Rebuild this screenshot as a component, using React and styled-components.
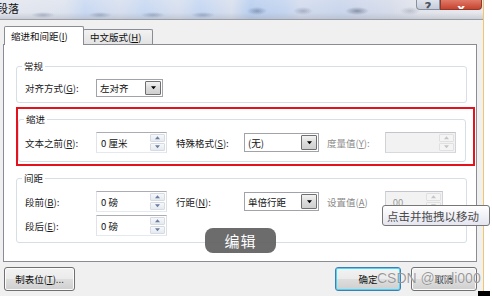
import React from "react";
import styled, { createGlobalStyle } from "styled-components";

const FONT = `"Noto Sans CJK SC", "Microsoft YaHei", sans-serif`;

const Global = createGlobalStyle`
  html, body { margin: 0; padding: 0; background: #fff; }
  body { font-family: ${FONT}; }
  * { box-sizing: border-box; }
`;

const Page = styled.div`
  position: relative;
  width: 492px;
  height: 296px;
  overflow: hidden;
  display: flex;
  background: #fff;
`;

const Window = styled.div`
  width: 484px;
  height: 296px;
  flex: none;
  border-right: 1px solid #f2c46e;
  display: flex;
  flex-direction: column;
  background: #f0f0f0;
`;

const TitleBar = styled.div`
  height: 20px;
  flex: none;
  display: flex;
  align-items: flex-start;
  border-bottom: 1px solid #9a9ea6;
  background:
    radial-gradient(ellipse 12px 3px at 43px 15px, rgba(80, 95, 125, 0.35), transparent),
    radial-gradient(ellipse 12px 3px at 100px 15px, rgba(80, 95, 125, 0.35), transparent),
    radial-gradient(ellipse 12px 3px at 153px 15px, rgba(80, 95, 125, 0.35), transparent),
    radial-gradient(ellipse 12px 3px at 203px 15px, rgba(80, 95, 125, 0.35), transparent),
    radial-gradient(ellipse 10px 4px at 257px 11px, rgba(60, 75, 105, 0.4), transparent),
    radial-gradient(ellipse 10px 4px at 303px 11px, rgba(60, 75, 105, 0.3), transparent),
    radial-gradient(ellipse 12px 4px at 357px 11px, rgba(50, 60, 85, 0.45), transparent),
    radial-gradient(ellipse 10px 4px at 410px 11px, rgba(80, 90, 110, 0.25), transparent),
    linear-gradient(180deg, rgba(255, 255, 255, 0.15), rgba(255, 255, 255, 0) 65%, rgba(170, 175, 185, 0.45)),
    linear-gradient(
      90deg,
      #e4e6ee 0px,
      #dde3ee 65px,
      #c8d8f2 85px,
      #d7dfee 120px,
      #c7d8f2 145px,
      #d7dfee 178px,
      #c4d6f2 200px,
      #d8dfed 232px,
      #b8ceef 250px,
      #c3d4ef 285px,
      #d2dbed 300px,
      #c9d5ec 340px,
      #d5dbe9 390px,
      #e2e4eb 420px,
      #e8e9ee 483px
    );
`;

const Title = styled.span`
  font-size: 11px;
  line-height: 14px;
  margin: 1px 0 0 -3px;
  color: #111;
`;

const Caption = styled.div`
  margin-left: auto;
  margin-right: 1px;
  display: flex;
`;

const CapButton = styled.div`
  width: ${(p) => (p.$close ? 42 : 24)}px;
  height: 10px;
  overflow: hidden;
  display: flex;
  justify-content: center;
  align-items: flex-end;
  border: 1px solid ${(p) => (p.$close ? "#8e3a2c" : "#8790a0")};
  border-top: none;
  border-radius: ${(p) => (p.$close ? "0 0 4px 0" : "0 0 0 4px")};
  background: ${(p) =>
    p.$close
      ? "linear-gradient(180deg, #e07a68, #c7432f)"
      : "linear-gradient(180deg, #dfe4ec, #c6ccd7)"};
  color: ${(p) => (p.$close ? "#fff" : "#4a5260")};
  font-family: "DejaVu Sans", sans-serif;
  font-weight: bold;
  font-size: 12px;
  line-height: 10px;
  & > span {
    transform: translateY(${(p) => (p.$close ? 5 : 3)}px);
  }
`;

const Body = styled.div`
  flex: 1;
  display: flex;
  flex-direction: column;
  padding: 6px 6px 0 3px;
`;

const TabStrip = styled.div`
  display: flex;
  align-items: flex-end;
  height: 18px;
  padding-left: 1px;
  position: relative;
  z-index: 1;
`;

const Tab = styled.div`
  height: ${(p) => (p.$active ? 19 : 15)}px;
  margin-bottom: ${(p) => (p.$active ? -1 : 0)}px;
  width: ${(p) => p.$w}px;
  margin-left: ${(p) => (p.$active ? 0 : -1)}px;
  border: 1px solid #898c95;
  border-bottom: none;
  border-radius: 2px 2px 0 0;
  background: ${(p) =>
    p.$active ? "#fff" : "linear-gradient(180deg, #f2f2f2, #e3e3e3)"};
  font-size: 9.5px;
  line-height: 12px;
  color: #111;
  padding: ${(p) => (p.$active ? "3px 0 0 6px" : "1px 0 0 6px")};
  white-space: nowrap;
`;

const Panel = styled.div`
  height: 218px;
  flex: none;
  border: 1px solid #898c95;
  background: #fff;
  padding: 0 9px 0 12px;
  display: flex;
  flex-direction: column;
`;

const Group = styled.div`
  border: 1px solid #d5dfe5;
  border-radius: 3px;
  margin: ${(p) => p.$m};
  padding: ${(p) => p.$p};
  display: flex;
  flex-direction: column;
  gap: 3px;
`;

const GroupTitle = styled.div`
  align-self: flex-start;
  margin: -7px 0 4px ${(p) => p.$ml || 3}px;
  padding: 0 2px;
  background: #fff;
  font-size: 9.5px;
  line-height: 12px;
  color: #1a1a1a;
`;

const RedFrame = styled.div`
  margin: 4px -8px 0 0;
  border: 2px solid #e3121c;
  padding: 10px 7px 2px 0;
`;

const Row = styled.div`
  display: flex;
  align-items: center;
  height: ${(p) => p.$h || 21}px;
`;

const Label = styled.span`
  flex: none;
  width: ${(p) => p.$w}px;
  margin-left: ${(p) => p.$ml || 0}px;
  font-size: 9.5px;
  line-height: 12px;
  white-space: nowrap;
  color: ${(p) => (p.$disabled ? "#8c8c8c" : "#1b1b1b")};
`;

const Field = styled.div`
  flex: none;
  width: ${(p) => p.$w}px;
  height: ${(p) => p.$h}px;
  display: flex;
  align-items: stretch;
  border: 1px solid ${(p) => (p.$disabled ? "#c2c6cc" : "#abadb3")};
  border-bottom-color: ${(p) => (p.$disabled ? "#d6d9de" : "#e3e9ef")};
  border-left-color: ${(p) => (p.$disabled ? "#d0d3d8" : "#e2e3ea")};
  border-right-color: ${(p) => (p.$disabled ? "#d0d3d8" : "#dbdfe6")};
  background: ${(p) => (p.$disabled ? "#f2f2f2" : "#fff")};
`;

const Value = styled.span`
  flex: 1;
  display: flex;
  align-items: center;
  padding-left: ${(p) => p.$pl || 4}px;
  font-size: 9.5px;
  line-height: 12px;
  color: ${(p) => (p.$disabled ? "#9a9a9a" : "#111")};
  white-space: nowrap;
  overflow: hidden;
`;

const Spinner = styled.div`
  width: 15px;
  flex: none;
  margin: 1px;
  display: flex;
  flex-direction: column;
  gap: 1px;
`;

const SpinHalf = styled.div`
  flex: 1;
  display: flex;
  align-items: center;
  justify-content: center;
  border: 1px solid ${(p) => (p.$disabled ? "#e0e0e0" : "#d6dbe3")};
  border-radius: 1px;
  background: ${(p) =>
    p.$disabled ? "#f4f4f4" : "linear-gradient(180deg, #f6f8fa, #e6eaf0)"};
`;

const Select = styled.div`
  flex: none;
  width: ${(p) => p.$w}px;
  height: ${(p) => p.$h || 19}px;
  display: flex;
  align-items: stretch;
  border: 1px solid #a0a4aa;
  background: #fff;
`;

const DropButton = styled.div`
  width: 16px;
  flex: none;
  margin: 1px;
  display: flex;
  align-items: center;
  justify-content: center;
  border: 1px solid #6f6f6f;
  border-radius: 1px;
  background: linear-gradient(180deg, #f3f3f3, #dcdcdc 50%, #cfcfcf);
`;

const Footer = styled.div`
  display: flex;
  margin-top: 5px;
  padding-left: 1px;
  gap: 10px;
`;

const Button = styled.div`
  width: ${(p) => p.$w}px;
  height: 24px;
  margin-left: ${(p) => (p.$push ? "auto" : "0")};
  display: flex;
  align-items: center;
  justify-content: center;
  border: 1px solid ${(p) => (p.$default ? "#3c7fb1" : "#707070")};
  border-radius: 3px;
  background: linear-gradient(180deg, #f2f2f2 0%, #ebebeb 48%, #dddddd 52%, #cfcfcf 100%);
  box-shadow: inset 0 0 0 1px ${(p) => (p.$default ? "#48d4fb" : "#fcfcfc")};
  font-size: 9.5px;
  line-height: 12px;
  color: #111;
  white-space: nowrap;
`;

const Toast = styled.div`
  position: absolute;
  left: 205px;
  top: 228px;
  width: 71px;
  height: 25px;
  border-radius: 8px;
  background: rgba(95, 95, 95, 0.92);
  color: #fff;
  font-size: 15px;
  line-height: 18px;
  display: flex;
  align-items: center;
  justify-content: center;
  letter-spacing: 1px;
`;

const Tooltip = styled.div`
  position: absolute;
  left: 382px;
  top: 205px;
  width: 108px;
  height: 21px;
  border: 1px solid #767676;
  border-radius: 3px;
  background: linear-gradient(180deg, #ffffff, #e4e5f0);
  color: #4a4a4a;
  font-size: 11.5px;
  line-height: 14px;
  display: flex;
  align-items: center;
  padding-left: 4px;
  white-space: nowrap;
`;

const Watermark = styled.div`
  position: absolute;
  left: 377px;
  top: 269px;
  font-family: "Liberation Sans", sans-serif;
  font-size: 14px;
  line-height: 18px;
  color: rgba(120, 120, 120, 0.75);
  text-shadow: 0 0 1px #fff;
  white-space: nowrap;
  pointer-events: none;
`;

const Cursor = styled.div`
  position: absolute;
  left: 478px;
  top: 291px;
  width: 12px;
  height: 5px;
  background: #000;
`;

const Arrow = ({ dir = "down", color = "#000", w = 5 }) => (
  <svg width={w} height={Math.ceil(w / 2) + 1} viewBox="0 0 6 4">
    {dir === "down" ? (
      <path d="M0 0H6L3 3.5Z" fill={color} />
    ) : (
      <path d="M0 3.5H6L3 0Z" fill={color} />
    )}
  </svg>
);

const Spin = ({ value, w = 71, h = 21, disabled, hideDown }) => (
  <Field $w={w} $h={h} $disabled={disabled}>
    <Value $disabled={disabled}>{value}</Value>
    <Spinner>
      <SpinHalf $disabled={disabled}>
        <Arrow dir="up" w={5} color={disabled ? "#c4c4c4" : "#6a7da0"} />
      </SpinHalf>
      {!hideDown && (
        <SpinHalf $disabled={disabled}>
          <Arrow dir="down" w={5} color={disabled ? "#c4c4c4" : "#6a7da0"} />
        </SpinHalf>
      )}
    </Spinner>
  </Field>
);

const Combo = ({ value, w, h }) => (
  <Select $w={w} $h={h}>
    <Value $pl={3}>{value}</Value>
    <DropButton>
      <Arrow dir="down" w={5} color="#000" />
    </DropButton>
  </Select>
);

const K = styled.u`
  text-underline-offset: 1px;
`;

export default function App() {
  return (
    <>
      <Global />
      <Page>
        <Window>
          <TitleBar>
            <Title>段落</Title>
            <Caption>
              <CapButton>
                <span>?</span>
              </CapButton>
              <CapButton $close>
                <span>x</span>
              </CapButton>
            </Caption>
          </TitleBar>
          <Body>
            <TabStrip>
              <Tab $active $w={80}>
                缩进和间距(<K>I</K>)
              </Tab>
              <Tab $w={70}>
                中文版式(<K>H</K>)
              </Tab>
            </TabStrip>
            <Panel>
              <Group $m="21px 0 0 0" $p="0 8px 5px 8px">
                <GroupTitle $ml={-3}>常规</GroupTitle>
                <Row $h={18}>
                  <Label $w={71}>
                    对齐方式(<K>G</K>):
                  </Label>
                  <Combo value="左对齐" w={67} h={18} />
                </Row>
              </Group>

              <RedFrame>
                <Group $m="0" $p="0 6px 8px 6px">
                  <GroupTitle $ml={-1}>缩进</GroupTitle>
                  <Row>
                    <Label $w={71}>
                      文本之前(<K>R</K>):
                    </Label>
                    <Spin value="0 厘米" />
                    <Label $w={68} $ml={9}>
                      特殊格式(<K>S</K>):
                    </Label>
                    <Combo value="(无)" w={75} />
                    <Label $w={58} $ml={8} $disabled>
                      度量值(<K>Y</K>):
                    </Label>
                    <Spin value="" disabled />
                  </Row>
                </Group>
              </RedFrame>

              <Group $m="12px 0 0 0" $p="0 8px 6px 8px">
                <GroupTitle $ml={-3}>间距</GroupTitle>
                <Row>
                  <Label $w={71}>
                    段前(<K>B</K>):
                  </Label>
                  <Spin value="0 磅" />
                  <Label $w={68} $ml={9}>
                    行距(<K>N</K>):
                  </Label>
                  <Combo value="单倍行距" w={75} />
                  <Label $w={58} $ml={8} $disabled>
                    设置值(<K>A</K>)
                  </Label>
                  <Spin value=".00" w={58} disabled />
                </Row>
                <Row>
                  <Label $w={71}>
                    段后(<K>E</K>):
                  </Label>
                  <Spin value="0 磅" />
                </Row>
              </Group>
            </Panel>
            <Footer>
              <Button $w={71}>
                制表位(<K>T</K>)...
              </Button>
              <Button $w={66} $push $default>
                确定
              </Button>
              <Button $w={66}>取消</Button>
            </Footer>
          </Body>
        </Window>
        <Toast>编辑</Toast>
        <Tooltip>点击并拖拽以移动</Tooltip>
        <Watermark>CSDN @mdi000</Watermark>
        <Cursor />
      </Page>
    </>
  );
}
